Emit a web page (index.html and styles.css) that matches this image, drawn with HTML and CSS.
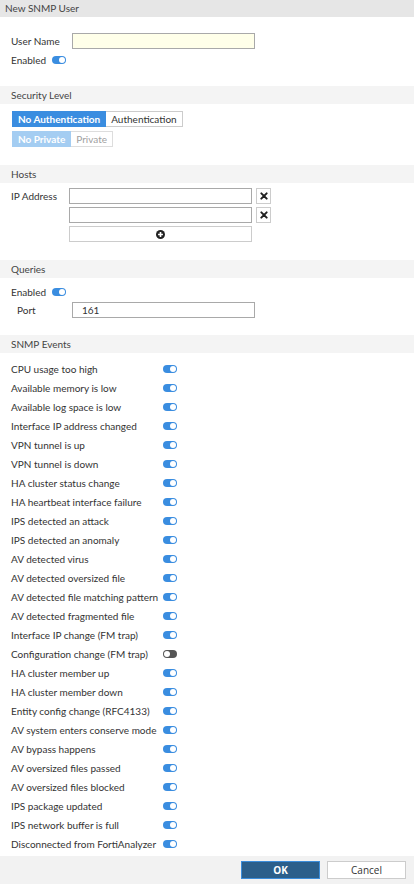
FILE: index.html
```html
<!DOCTYPE html>
<html>
<head>
<meta charset="utf-8">
<link rel="stylesheet" href="styles.css">
</head>
<body>
<div class="dialog">
  <div class="title">New SNMP User</div>

  <div class="sec sec-user">
    <div class="row">
      <label class="lbl w61">User Name</label>
      <div class="input yellow"></div>
    </div>
    <div class="row row-en">
      <label class="lbl">Enabled</label>
      <span class="toggle on"></span>
    </div>
  </div>

  <div class="sec-head">Security Level</div>
  <div class="sec sec-security">
    <div class="btn-group">
      <span class="seg active">No Authentication</span><span class="seg">Authentication</span>
    </div>
    <div class="btn-group">
      <span class="seg active-light">No Private</span><span class="seg disabled">Private</span>
    </div>
  </div>

  <div class="sec-head">Hosts</div>
  <div class="sec sec-hosts">
    <label class="lbl w58">IP Address</label>
    <div class="host-list">
      <div class="host-row">
        <div class="input host"></div>
        <span class="xbtn"><svg width="8" height="8" viewBox="0 0 9 9"><path d="M1.5 1.5 L7.5 7.5 M7.5 1.5 L1.5 7.5" stroke="#222" stroke-width="2.2" stroke-linecap="round"/></svg></span>
      </div>
      <div class="host-row">
        <div class="input host"></div>
        <span class="xbtn"><svg width="8" height="8" viewBox="0 0 9 9"><path d="M1.5 1.5 L7.5 7.5 M7.5 1.5 L1.5 7.5" stroke="#222" stroke-width="2.2" stroke-linecap="round"/></svg></span>
      </div>
      <div class="host-row">
        <div class="addbtn"><svg width="9" height="9" viewBox="0 0 10 10"><circle cx="5" cy="5" r="5" fill="#222"/><path d="M5 2.3 V7.7 M2.3 5 H7.7" stroke="#fff" stroke-width="1.8"/></svg></div>
      </div>
    </div>
  </div>

  <div class="sec-head">Queries</div>
  <div class="sec sec-queries">
    <div class="row row-en">
      <label class="lbl">Enabled</label>
      <span class="toggle on"></span>
    </div>
    <div class="row">
      <label class="lbl w61 indent">Port</label>
      <div class="input">161</div>
    </div>
  </div>

  <div class="sec-head">SNMP Events</div>
  <div class="sec sec-events">
    <div class="ev"><span class="ev-lbl">CPU usage too high</span><span class="toggle on"></span></div>
    <div class="ev"><span class="ev-lbl">Available memory is low</span><span class="toggle on"></span></div>
    <div class="ev"><span class="ev-lbl">Available log space is low</span><span class="toggle on"></span></div>
    <div class="ev"><span class="ev-lbl">Interface IP address changed</span><span class="toggle on"></span></div>
    <div class="ev"><span class="ev-lbl">VPN tunnel is up</span><span class="toggle on"></span></div>
    <div class="ev"><span class="ev-lbl">VPN tunnel is down</span><span class="toggle on"></span></div>
    <div class="ev"><span class="ev-lbl">HA cluster status change</span><span class="toggle on"></span></div>
    <div class="ev"><span class="ev-lbl">HA heartbeat interface failure</span><span class="toggle on"></span></div>
    <div class="ev"><span class="ev-lbl">IPS detected an attack</span><span class="toggle on"></span></div>
    <div class="ev"><span class="ev-lbl">IPS detected an anomaly</span><span class="toggle on"></span></div>
    <div class="ev"><span class="ev-lbl">AV detected virus</span><span class="toggle on"></span></div>
    <div class="ev"><span class="ev-lbl">AV detected oversized file</span><span class="toggle on"></span></div>
    <div class="ev"><span class="ev-lbl">AV detected file matching pattern</span><span class="toggle on"></span></div>
    <div class="ev"><span class="ev-lbl">AV detected fragmented file</span><span class="toggle on"></span></div>
    <div class="ev"><span class="ev-lbl">Interface IP change (FM trap)</span><span class="toggle on"></span></div>
    <div class="ev"><span class="ev-lbl">Configuration change (FM trap)</span><span class="toggle off"></span></div>
    <div class="ev"><span class="ev-lbl">HA cluster member up</span><span class="toggle on"></span></div>
    <div class="ev"><span class="ev-lbl">HA cluster member down</span><span class="toggle on"></span></div>
    <div class="ev"><span class="ev-lbl">Entity config change (RFC4133)</span><span class="toggle on"></span></div>
    <div class="ev"><span class="ev-lbl">AV system enters conserve mode</span><span class="toggle on"></span></div>
    <div class="ev"><span class="ev-lbl">AV bypass happens</span><span class="toggle on"></span></div>
    <div class="ev"><span class="ev-lbl">AV oversized files passed</span><span class="toggle on"></span></div>
    <div class="ev"><span class="ev-lbl">AV oversized files blocked</span><span class="toggle on"></span></div>
    <div class="ev"><span class="ev-lbl">IPS package updated</span><span class="toggle on"></span></div>
    <div class="ev"><span class="ev-lbl">IPS network buffer is full</span><span class="toggle on"></span></div>
    <div class="ev"><span class="ev-lbl">Disconnected from FortiAnalyzer</span><span class="toggle on"></span></div>
  </div>

  <div class="footer">
    <span class="fbtn ok">OK</span>
    <span class="fbtn cancel">Cancel</span>
  </div>
</div>
</body>
</html>
```

FILE: styles.css
```css
* { box-sizing: border-box; }
html, body {
  margin: 0;
  padding: 0;
  background: #fff;
}
body {
  font-family: Lato, "Open Sans", sans-serif;
  font-size: 10px;
  color: #333;
}
.dialog {
  width: 414px;
  height: 884px;
  display: flex;
  flex-direction: column;
}
.title {
  height: 17px;
  line-height: 17px;
  background: #e6e6e6;
  padding-left: 5px;
  color: #444;
}
.sec-head {
  height: 18px;
  line-height: 18px;
  background: #f4f4f4;
  padding-left: 11px;
  color: #444;
}
.sec { padding-left: 11px; }
.row {
  display: flex;
  align-items: center;
  height: 16px;
}
.lbl { line-height: 16px; }
.w61 { width: 61px; flex: none; }
.w58 { width: 58px; flex: none; }
.indent { padding-left: 6px; }
.input {
  width: 183px;
  height: 16px;
  border: 1px solid #a9a9a9;
  background: #fff;
  padding-left: 9px;
  line-height: 14px;
  color: #333;
}
.input.yellow { background: #ffffe9; }

.sec-user { padding-top: 16px; padding-bottom: 18px; }
.sec-user .row + .row { margin-top: 3px; }
.row-en .toggle { margin-left: 6px; }

.toggle {
  display: inline-block;
  position: relative;
  width: 14px;
  height: 8px;
  border-radius: 4px;
  background: #3a8de0;
  flex: none;
}
.toggle::after {
  content: "";
  position: absolute;
  top: 1px;
  right: 1px;
  width: 6px;
  height: 6px;
  border-radius: 50%;
  background: #fff;
}
.toggle.off { background: #555; }
.toggle.off::after { right: auto; left: 1px; }

.sec-security { padding-top: 7px; padding-bottom: 18px; padding-left: 12px; }
.btn-group { display: flex; height: 16px; }
.btn-group + .btn-group { margin-top: 4px; }
.seg {
  height: 16px;
  line-height: 14px;
  border: 1px solid #ccc;
  padding: 0 5px;
  background: #fff;
  color: #333;
}
.seg + .seg { border-left: none; }
.seg.active {
  background: #3a8de0;
  border-color: #3a8de0;
  color: #fff;
  font-weight: bold;
}
.seg.active-light {
  background: #a4cdf2;
  border-color: #a4cdf2;
  color: #fff;
  font-weight: bold;
}
.seg.disabled { color: #a0a0a0; border-color: #ddd; }

.sec-hosts {
  display: flex;
  padding-top: 5px;
  padding-bottom: 18px;
}
.host-list { display: flex; flex-direction: column; gap: 3px; }
.host-row { display: flex; align-items: center; gap: 4px; }
.input.host { width: 183px; }
.xbtn {
  width: 15px;
  height: 16px;
  border: 1px solid #ccc;
  display: flex;
  align-items: center;
  justify-content: center;
}
.addbtn {
  width: 183px;
  height: 16px;
  border: 1px solid #ccc;
  display: flex;
  align-items: center;
  justify-content: center;
}

.sec-queries { padding-top: 6px; padding-bottom: 17px; }
.sec-queries .row + .row { margin-top: 2px; }

.sec-events { padding-top: 6px; flex: 1; }
.ev {
  display: flex;
  align-items: center;
  height: 19px;
}
.ev-lbl { width: 152px; flex: none; white-space: nowrap; }

.footer {
  height: 28px;
  background: #f2f2f2;
  display: flex;
  justify-content: flex-end;
  align-items: center;
  gap: 7px;
  padding-right: 8px;
}
.fbtn {
  width: 79px;
  height: 18px;
  line-height: 16px;
  text-align: center;
  border: 1px solid #ccc;
  background: #fff;
  color: #333;
  font-family: "Open Sans", Lato, sans-serif;
}
.fbtn.ok {
  background: #2b5f8b;
  border-color: #3b8ddb;
  color: #fff;
  font-weight: bold;
}
```
